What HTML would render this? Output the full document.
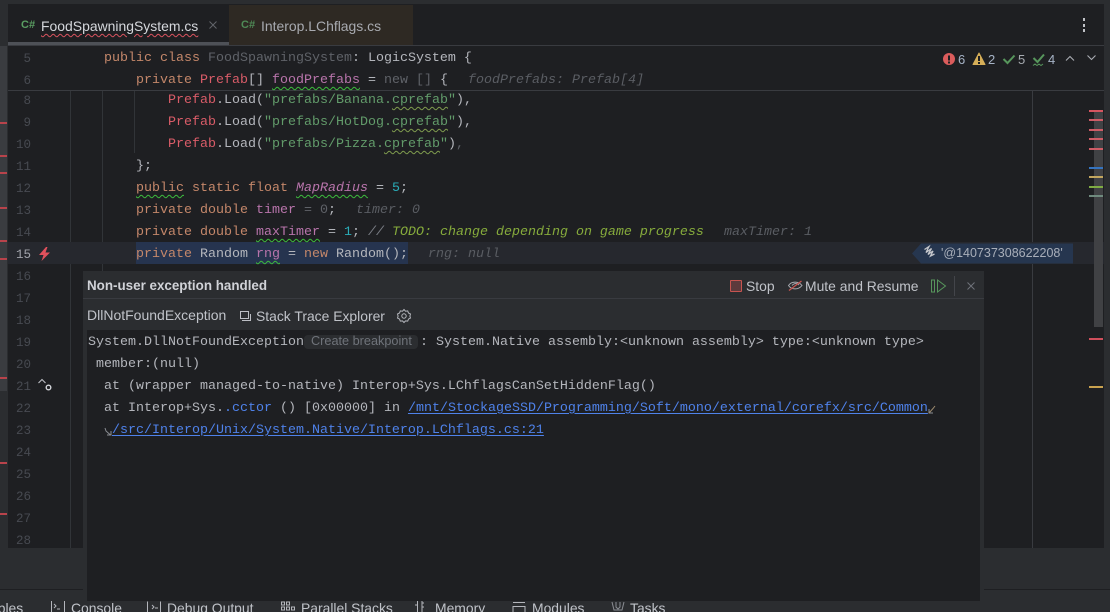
<!DOCTYPE html>
<html><head><meta charset="utf-8">
<style>
html,body{margin:0;padding:0;background:#2b2d30;}
#r{position:relative;width:1110px;height:612px;overflow:hidden;background:#2b2d30;font-family:"Liberation Sans",sans-serif;}
.a{position:absolute;}
.l{position:absolute;white-space:pre;font-family:"Liberation Mono",monospace;font-size:13.33px;line-height:22px;height:22px;color:#b4b6bc;margin-top:1px;}
.n{position:absolute;left:0;width:31px;text-align:right;font-family:"Liberation Mono",monospace;font-size:12.5px;line-height:22px;height:22px;color:#474a51;margin-top:1px;}
.k{color:#c4876a}.r{color:#d95c68}.s{color:#629b6a}.u{color:#5f6268}.p{color:#b874ab}.c{color:#2aacb8}
.h{color:#5a5d63;font-style:italic}.t{color:#86ab3c;font-style:italic}.g{color:#7a7e85}
.w{text-decoration:underline wavy #3dbb3d 1px;text-underline-offset:3px;}
.wy{text-decoration:underline wavy #7f9c4e 1px;text-underline-offset:3px;}
.lk{color:#4f82ea;text-decoration:underline;text-underline-offset:2px}
.ui{position:absolute;white-space:pre;font-size:13.9px;color:#c0c3c9;}
.m{position:absolute;left:1089px;width:14px;height:2px;}
.lm{position:absolute;left:0;width:7px;height:2px;background:#b8434b;}
svg{position:absolute;overflow:visible}
</style></head><body><div id="r">

<!-- editor backdrop -->
<div class="a" style="left:8px;top:4px;width:1096px;height:544px;background:#1e1f22"></div>
<div class="a" style="left:0;top:46px;width:7px;height:345px;background:#3a3c40"></div>
<div class="lm" style="top:122px"></div><div class="lm" style="top:155px"></div><div class="lm" style="top:172px"></div><div class="lm" style="top:207px"></div><div class="lm" style="top:240px"></div><div class="lm" style="top:258px"></div><div class="lm" style="top:377px"></div><div class="lm" style="top:462px"></div><div class="lm" style="top:513px"></div>

<!-- tabs -->
<div class="a" style="left:229px;top:5px;width:184px;height:40px;background:#2e2923"></div>
<div class="a" style="left:8px;top:42px;width:221px;height:3px;background:#4e5157"></div>
<div class="a" style="left:8px;top:45px;width:1096px;height:1px;background:#393b40"></div>
<div class="ui" style="left:21px;top:19px;font-size:11px;font-weight:bold;color:#5a9e62">C#</div>
<div class="ui" style="left:41px;top:18px;font-size:13.95px;color:#d5d7dc;text-decoration:underline wavy #d9535f 1px;text-underline-offset:2px">FoodSpawningSystem.cs</div>
<svg style="left:209px;top:21px" width="8" height="8"><path d="M.5.5l7 7M7.5.5l-7 7" stroke="#62656b" fill="none"/></svg>
<div class="ui" style="left:241px;top:19px;font-size:11px;font-weight:bold;color:#4f8a56">C#</div>
<div class="ui" style="left:261px;top:18px;font-size:13.95px;color:#a8aab0">Interop.LChflags.cs</div>
<div class="a" style="left:1083px;top:18px;width:2px;height:3px;background:#c0c2c7"></div>
<div class="a" style="left:1083px;top:24px;width:2px;height:3px;background:#c0c2c7"></div>
<div class="a" style="left:1083px;top:29px;width:2px;height:3px;background:#c0c2c7"></div>

<!-- guides -->
<div class="a" style="left:70px;top:91px;width:1px;height:457px;background:#313438"></div>
<div class="a" style="left:102px;top:91px;width:1px;height:457px;background:#313438"></div>
<div class="a" style="left:134px;top:91px;width:1px;height:62px;background:#313438"></div>
<div class="a" style="left:1032px;top:91px;width:1px;height:457px;background:#393b40"></div>

<!-- line 15 highlight -->
<div class="a" style="left:8px;top:242px;width:1096px;height:22px;background:#26282e"></div>
<div class="a" style="left:136px;top:242px;width:272px;height:22px;background:#26344f"></div>

<!-- sticky -->
<div class="a" style="left:8px;top:90px;width:1096px;height:1px;background:#393b40"></div>
<div class="n" style="top:47px">5</div>
<div class="l" style="left:104px;top:47px"><span class="k">public class</span> <span class="u">FoodSpawningSystem</span>: LogicSystem {</div>
<div class="n" style="top:69px">6</div>
<div class="l" style="left:136px;top:69px"><span class="k">private</span> <span class="r">Prefab</span>[] <span class="p w">foodPrefabs</span> = <span class="u">new [] </span>{</div>
<div class="l h" style="left:468px;top:69px">foodPrefabs: Prefab[4]</div>

<div class="n" style="top:89px">8</div>
<div class="l" style="left:168px;top:89px"><span class="r">Prefab</span>.Load(<span class="s">"prefabs/Banana.<span class="wy">cprefab</span>"</span>),</div>
<div class="n" style="top:111px">9</div>
<div class="l" style="left:168px;top:111px"><span class="r">Prefab</span>.Load(<span class="s">"prefabs/HotDog.<span class="wy">cprefab</span>"</span>),</div>
<div class="n" style="top:133px">10</div>
<div class="l" style="left:168px;top:133px"><span class="r">Prefab</span>.Load(<span class="s">"prefabs/Pizza.<span class="wy">cprefab</span>"</span>)<span class="u">,</span></div>
<div class="n" style="top:155px">11</div>
<div class="l" style="left:136px;top:155px">};</div>
<div class="n" style="top:177px">12</div>
<div class="l" style="left:136px;top:177px"><span class="k w">public</span> <span class="k">static float</span> <span class="p w" style="font-style:italic">MapRadius</span> = <span class="c">5</span>;</div>
<div class="n" style="top:199px">13</div>
<div class="l" style="left:136px;top:199px"><span class="k">private double</span> <span class="p">timer</span> <span class="u">= 0</span>;</div>
<div class="l h" style="left:356px;top:199px">timer: 0</div>
<div class="n" style="top:221px">14</div>
<div class="l" style="left:136px;top:221px"><span class="k">private double</span> <span class="p w">maxTimer</span> = <span class="c">1</span>; <span class="g" style="font-style:italic">// </span><span class="t">TODO: change depending on game progress</span></div>
<div class="l h" style="left:724px;top:221px">maxTimer: 1</div>
<div class="n" style="top:243px;color:#a1a3ab">15</div>
<svg style="left:38px;top:247px" width="13" height="14"><path d="M8 0L1 8h4.500L3.500 14 12 5.500H7.500L9.500 0z" fill="#e0515c"/></svg>
<div class="l" style="left:136px;top:243px"><span class="k">private</span> Random <span class="p w">rng</span> = <span class="k">new</span> Random();</div>
<div class="l h" style="left:428px;top:243px">rng: null</div>
<div class="n" style="top:265px">16</div><div class="n" style="top:287px">17</div><div class="n" style="top:309px">18</div><div class="n" style="top:331px">19</div><div class="n" style="top:353px">20</div><div class="n" style="top:375px">21</div><div class="n" style="top:397px">22</div><div class="n" style="top:419px">23</div><div class="n" style="top:441px">24</div><div class="n" style="top:463px">25</div><div class="n" style="top:485px">26</div><div class="n" style="top:507px">27</div><div class="n" style="top:529px">28</div>
<svg style="left:37px;top:378px" width="16" height="14"><path d="M1.500 5l3.500-3.500 3.500 3.500" stroke="#bcbec4" stroke-width="1.100" fill="none"/><circle cx="11.500" cy="9.500" r="2.300" stroke="#d5d7dc" stroke-width="1.400" fill="none"/></svg>

<!-- inspection widget -->
<svg style="left:943px;top:53px" width="125" height="13">
<circle cx="6" cy="6" r="6" fill="#db5c5c"/><rect x="5" y="2.500" width="2" height="5" fill="#1e1f22"/><rect x="5" y="8.500" width="2" height="2" fill="#1e1f22"/>
<path d="M36 0l6 11.500H30z" fill="#d6ae58" stroke="#d6ae58" stroke-linejoin="round"/><rect x="35" y="3" width="2" height="5" fill="#1e1f22"/><rect x="35" y="9" width="2" height="2" fill="#1e1f22"/>
<path d="M60.500 6l4 4 7-7.500" stroke="#57965c" stroke-width="2" fill="none"/>
<path d="M90.500 5l4 4 6.500-7.500" stroke="#57965c" stroke-width="2" fill="none"/><path d="M90 12.500l2-1.500 2 1.500 2-1.500 2 1.500 2-1.500" stroke="#57965c" fill="none"/>
<path d="M123 7.500l4-4 4 4" stroke="#a9acb3" stroke-width="1.100" fill="none"/>
</svg>
<div class="ui" style="left:958px;top:52px;font-size:13px;color:#a6b3c6">6</div>
<div class="ui" style="left:988px;top:52px;font-size:13px;color:#a6b3c6">2</div>
<div class="ui" style="left:1018px;top:52px;font-size:13px;color:#a6aab0">5</div>
<div class="ui" style="left:1048px;top:52px;font-size:13px;color:#a6b3c6">4</div>
<svg style="left:1086px;top:54px" width="12" height="8"><path d="M1.500 1.500l4 4 4-4" stroke="#a9acb3" stroke-width="1.100" fill="none"/></svg>

<!-- badge -->
<svg style="left:911px;top:243px" width="163" height="21"><path d="M162 0.500H10L1 10.500l9 10h152z" fill="#26364f"/>
<path d="M13.500 6.500l4.500-3-3 6 5.500-4-3.500 6 5-3.500-2.500 5 4-2" stroke="#c5c7cc" stroke-width="1.300" fill="none"/></svg>
<div class="ui" style="left:941px;top:246px;font-size:12.5px;color:#a9afba">'@140737308622208'</div>

<!-- right gutter -->
<div class="a" style="left:1104px;top:4px;width:6px;height:544px;background:#2b2d30"></div>
<div class="a" style="left:1094px;top:111px;width:9px;height:216px;background:#404144"></div>
<div class="m" style="top:110px;background:#d65560"></div><div class="m" style="top:119px;background:#cf5c66"></div><div class="m" style="top:129px;background:#cf5c66"></div><div class="m" style="top:138px;background:#cf5c66"></div><div class="m" style="top:148px;background:#cf5c66"></div>
<div class="m" style="top:167px;background:#3574c0"></div><div class="m" style="top:176px;background:#c2a65e"></div><div class="m" style="top:186px;background:#7fab43"></div><div class="m" style="top:195px;background:#6f8a7e"></div>
<div class="m" style="top:338px;background:#cf4f5c"></div><div class="m" style="top:386px;background:#c9a24f"></div>

<!-- lower tool area -->
<div class="a" style="left:0;top:548px;width:1110px;height:64px;background:#2b2d30"></div>
<div class="a" style="left:0;top:589px;width:1110px;height:1px;background:#1e1f22"></div>

<!-- popup panel -->
<div class="a" style="left:83px;top:271px;width:901px;height:330px;background:#2b2d30"></div>
<div class="a" style="left:83px;top:298px;width:901px;height:1px;background:#393b40"></div>
<div class="a" style="left:87px;top:330px;width:893px;height:271px;background:#1e1f22"></div>
<div class="ui" style="left:87px;top:278px;font-size:13.4px;font-weight:bold;color:#d0d2d7">Non-user exception handled</div>
<div class="a" style="left:730px;top:280px;width:10px;height:10px;background:#5c3a3c;border:1px solid #c75450;border-radius:1px"></div>
<div class="ui" style="left:746px;top:278px">Stop</div>
<svg style="left:788px;top:279px" width="15" height="13"><path d="M.5 6.500C3.500 2 10.500 2 14 6.500 10.500 11 3.500 11 .5 6.500z" stroke="#a8aab0" fill="none"/><path d="M4 6.500C6 4 9 4 11 6" stroke="#a8aab0" fill="none"/><path d="M1 11.500L13.500 2" stroke="#c75450" stroke-width="1.300"/></svg>
<div class="ui" style="left:805px;top:278px">Mute and Resume</div>
<svg style="left:931px;top:279px" width="15" height="14"><path d="M.5 1h3v12h-3zM6.500 1l8 6-8 6z" stroke="#57965c" fill="none"/></svg>
<div class="a" style="left:954px;top:276px;width:1px;height:20px;background:#43454a"></div>
<svg style="left:967px;top:282px" width="8" height="8"><path d="M.5.5l7 7M7.500.5l-7 7" stroke="#6f737a" fill="none"/></svg>

<div class="ui" style="left:87px;top:307px;font-size:14px">DllNotFoundException</div>
<svg style="left:240px;top:311px" width="12" height="12"><path d="M.5.500h8v7h-8zM2 9.500h8.500V3" stroke="#bcbec4" fill="none"/></svg>
<div class="ui" style="left:256px;top:308px">Stack Trace Explorer</div>
<svg style="left:397px;top:309px" width="14" height="14"><path d="M7 .5l1.500 1.700 2.200-.3.800 2.100 2 1-.6 2.100.6 1.900-2 1.100-.8 2-2.200-.2L7 13.500l-1.500-1.600-2.200.2-.8-2-2-1.100.6-1.900-.6-2.100 2-1 .8-2.100 2.200.3z" stroke="#b4b6bc" fill="none"/><circle cx="7" cy="7" r="2.200" stroke="#b4b6bc" fill="none"/></svg>

<div class="l" style="left:88px;top:331px">System.DllNotFoundException</div>
<div class="a" style="left:304px;top:335px;width:114px;height:14px;background:#2b2d30;border-radius:4px"></div>
<div class="ui" style="left:311px;top:334px;font-size:12.7px;color:#6f737a">Create breakpoint</div>
<div class="l" style="left:420px;top:331px">: System.Native assembly:&lt;unknown assembly&gt; type:&lt;unknown type&gt;</div>
<div class="l" style="left:96px;top:353px">member:(null)</div>
<div class="l" style="left:104px;top:375px">at (wrapper managed-to-native) Interop+Sys.LChflagsCanSetHiddenFlag()</div>
<div class="l" style="left:104px;top:397px">at Interop+Sys.<span style="color:#4f82ea">.cctor</span> () [0x00000] in <span class="lk">/mnt/StockageSSD/Programming/Soft/mono/external/corefx/src/Common</span></div>
<svg style="left:928px;top:405px" width="8" height="9"><path d="M1 4v4h4" stroke="#8a8d93" fill="none"/><path d="M1 8L5 3.500 7 1" stroke="#9c8a6e" fill="none"/></svg>
<svg style="left:104px;top:427px" width="8" height="9"><path d="M1 1L2 4 6.500 8" stroke="#8a8d93" fill="none"/><path d="M7 4v4H3" stroke="#8a8d93" fill="none"/></svg>
<div class="l" style="left:112px;top:419px"><span class="lk">/src/Interop/Unix/System.Native/Interop.LChflags.cs:21</span></div>

<!-- bottom tabs -->
<div class="a" style="left:0;top:601px;width:1110px;height:11px;overflow:hidden">
 <div class="ui" style="left:-10px;top:-1px">ables</div>
 <svg style="left:51px;top:-2px" width="14" height="14"><path d="M.5.500h13v13H.5zM3 5l2 2-2 2M6 10h3" stroke="#b4b6bc" fill="none"/></svg>
 <div class="ui" style="left:71px;top:-1px">Console</div>
 <svg style="left:147px;top:0" width="14" height="12"><path d="M.5.500v12h3M13.500.500v12h-3M5 4l2 2-2 2M8 7h3" stroke="#b4b6bc" fill="none"/></svg>
 <div class="ui" style="left:167px;top:-1px">Debug Output</div>
 <svg style="left:281px;top:0" width="14" height="12"><path d="M.5 1h3v3h-3zM5.500 1h3v3h-3zM.5 6h3v3h-3zM5.500 6h3v3h-3zM10.500 6h3v3h-3z" stroke="#b4b6bc" fill="none"/></svg>
 <div class="ui" style="left:301px;top:-1px">Parallel Stacks</div>
 <svg style="left:415px;top:0" width="10" height="12"><path d="M2.500 0v11M7 0v11M9 2H7M9 6H7M0 4h2" stroke="#b4b6bc" fill="none"/></svg>
 <div class="ui" style="left:435px;top:-1px">Memory</div>
 <svg style="left:512px;top:0" width="14" height="12"><path d="M1 1.500h12M1 5.500h12v7H1z" stroke="#b4b6bc" fill="none"/></svg>
 <div class="ui" style="left:532px;top:-1px">Modules</div>
 <svg style="left:611px;top:0" width="14" height="12"><path d="M1 1l2 8h8l2-8M5 1v5l2 2 2-2V1" stroke="#8a8d93" fill="none"/></svg>
 <div class="ui" style="left:630px;top:-1px">Tasks</div>
</div>
</div></body></html>
